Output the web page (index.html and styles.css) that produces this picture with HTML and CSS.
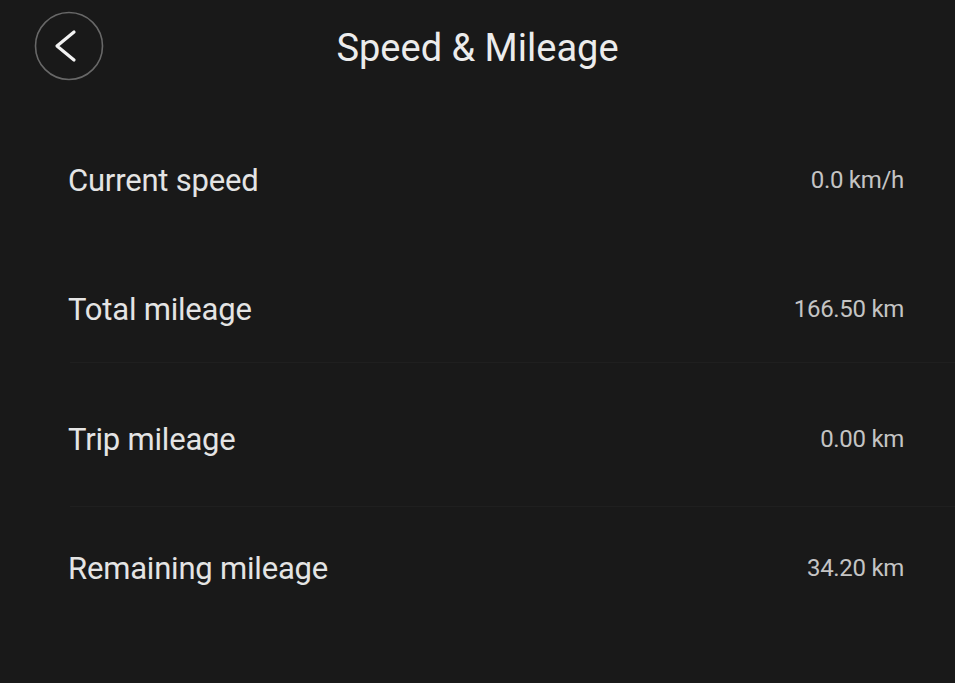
FILE: index.html
```html
<!DOCTYPE html>
<html lang="en">
<head>
<meta charset="utf-8">
<title>Speed &amp; Mileage</title>
<link rel="stylesheet" href="styles.css">
</head>
<body>
<div class="page">
  <header class="header">
    <button class="back" aria-label="Back">
      <svg width="70" height="70" viewBox="0 0 70 70">
        <circle cx="35" cy="35" r="33.5" fill="none" stroke="#686868" stroke-width="1.6"/>
        <path d="M40 21 L23 35 L40 49" fill="none" stroke="#f2f2f2" stroke-width="3.2" stroke-linecap="round" stroke-linejoin="round"/>
      </svg>
    </button>
    <h1 class="title">Speed &amp; Mileage</h1>
  </header>
  <main class="list">
    <div class="row row-1"><span class="label">Current speed</span><span class="value">0.0 km/h</span></div>
    <div class="row row-2"><span class="label">Total mileage</span><span class="value">166.50 km</span></div>
    <div class="sep sep-1"></div>
    <div class="row row-3"><span class="label">Trip mileage</span><span class="value">0.00 km</span></div>
    <div class="sep sep-2"></div>
    <div class="row row-4"><span class="label">Remaining mileage</span><span class="value">34.20 km</span></div>
  </main>
</div>
</body>
</html>
```

FILE: styles.css
```css
html, body {
  margin: 0;
  padding: 0;
  background: #191919;
}
body {
  width: 955px;
  height: 683px;
  overflow: hidden;
  font-family: Roboto, "Liberation Sans", sans-serif;
}
.page {
  display: flex;
  flex-direction: column;
}
.header {
  height: 94px;
  display: flex;
  align-items: center;
  justify-content: center;
  position: relative;
}
.back {
  position: absolute;
  left: 34px;
  top: 11px;
  width: 70px;
  height: 70px;
  padding: 0;
  border: none;
  background: transparent;
  display: block;
}
.back svg { display: block; }
.title {
  margin: 0;
  font-size: 38px;
  font-weight: 400;
  color: #ececec;
  line-height: 1;
  transform: translateY(1px);
}
.list {
  display: flex;
  flex-direction: column;
  padding-left: 68px;
}
.row {
  height: 52px;
  display: flex;
  align-items: center;
  justify-content: space-between;
  padding-right: 51px;
}
.row-1 { margin-top: 60px; }
.row-2 { margin-top: 77px; }
.row-3 { margin-top: 50px; }
.row-4 { margin-top: 35px; }
.sep {
  height: 1px;
  background: #1f1f1f;
  margin-left: 2px;
}
.sep-1 { margin-top: 27px; }
.sep-2 { margin-top: 41px; }
.label {
  font-size: 31px;
  color: #e4e4e4;
  letter-spacing: -0.2px;
}
.value {
  font-size: 24px;
  color: #c4c4c4;
  letter-spacing: -0.3px;
}
```
